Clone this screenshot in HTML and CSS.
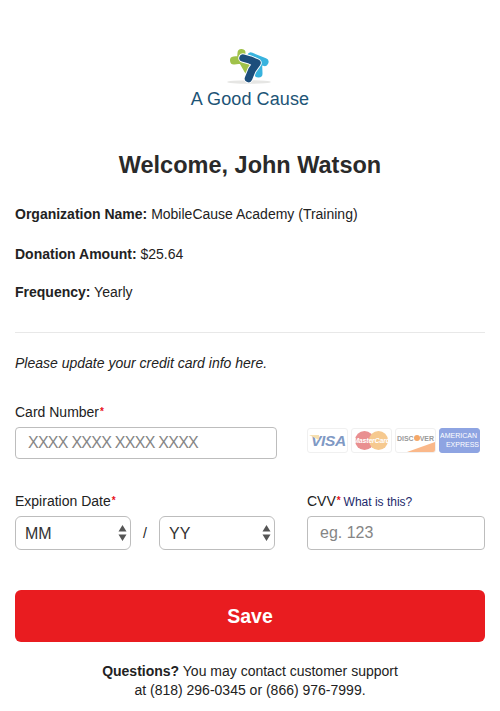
FILE: index.html
```html
<!DOCTYPE html>
<html lang="en">
<head>
<meta charset="utf-8">
<title>A Good Cause</title>
<link rel="stylesheet" href="styles.css">
</head>
<body>
<main class="page">
  <header class="logo">
    <svg class="logo-mark" width="50" height="42" viewBox="0 0 50 42" aria-hidden="true">
      <ellipse cx="24" cy="37" rx="22" ry="1.800" fill="#e6e6e4"/>
      <path d="M16.500 8 L16 14 M9 15.500 L17 14.500 L23 25" fill="none" stroke="#a0c24a" stroke-width="8" stroke-linecap="round" stroke-linejoin="round"/>
      <path d="M26 11.500 L39.500 17 M33 15 L33.500 28.500" fill="none" stroke="#38b3de" stroke-width="8" stroke-linecap="round" stroke-linejoin="round"/>
      <path d="M18 13 L25 15 L32 18 L27 25 L23.500 33.500" fill="none" stroke="#fff" stroke-width="9.500" stroke-linecap="round" stroke-linejoin="round"/>
      <path d="M18 13 L25 15 L32 18 L27 25 L23.500 33.500" fill="none" stroke="#1d4f7c" stroke-width="7.500" stroke-linecap="round" stroke-linejoin="round"/>
    </svg>
    <div class="logo-name">A Good Cause</div>
  </header>
  <h1 class="welcome">Welcome, John Watson</h1>
  <p class="info"><b>Organization Name:</b> MobileCause Academy (Training)</p>
  <p class="info"><b>Donation Amount:</b> $25.64</p>
  <p class="info"><b>Frequency:</b> Yearly</p>
  <hr class="rule">
  <p class="note">Please update your credit card info here.</p>
  <form class="form">
    <div class="card-row">
      <div class="field card-field">
        <label class="label" for="card">Card Number<span class="req">*</span></label>
        <input class="input card-input" id="card" placeholder="XXXX XXXX XXXX XXXX">
      </div>
      <div class="cards" aria-hidden="true">
        <div class="cc cc-visa"><i class="visa-flag"></i><span>VISA</span></div>
        <div class="cc cc-mc">
          <i class="mc-left"></i><i class="mc-right"></i>
          <span>MasterCard</span>
        </div>
        <div class="cc cc-disc"><span>DISC<b></b>VER</span><i class="disc-swoosh"></i></div>
        <div class="cc cc-amex"><span>AMERICAN</span><span class="amex-2">EXPRESS</span></div>
      </div>
    </div>
    <div class="exp-row">
      <div class="field exp-field">
        <label class="label" for="mm">Expiration Date<span class="req">*</span></label>
        <div class="exp-controls">
          <div class="select-wrap">
            <select class="select" id="mm"><option>MM</option></select>
            <svg class="updown" width="9" height="16" viewBox="0 0 9 16" aria-hidden="true"><path d="M4.500 0l4 6.500h-8zM4.500 16l4-6.500h-8z" fill="#555"/></svg>
          </div>
          <span class="slash">/</span>
          <div class="select-wrap">
            <select class="select" id="yy"><option>YY</option></select>
            <svg class="updown" width="9" height="16" viewBox="0 0 9 16" aria-hidden="true"><path d="M4.500 0l4 6.500h-8zM4.500 16l4-6.500h-8z" fill="#555"/></svg>
          </div>
        </div>
      </div>
      <div class="field cvv-field">
        <label class="label" for="cvv">CVV<span class="req">*</span> <a class="what" href="#">What is this?</a></label>
        <input class="input cvv-input" id="cvv" placeholder="eg. 123">
      </div>
    </div>
    <button class="save" type="button">Save</button>
  </form>
  <p class="contact"><b>Questions?</b> You may contact customer support<br>at (818) 296-0345 or (866) 976-7999.</p>
</main>
</body>
</html>
```

FILE: styles.css
```css
* { box-sizing: border-box; }
html, body { margin: 0; padding: 0; background: #fff; }
body { font-family: "Liberation Sans", Arial, sans-serif; color: #222; font-size: 14px; }
.page { width: 500px; height: 711px; padding: 45px 15px 0; overflow: hidden; }

.logo { display: flex; flex-direction: column; align-items: center; }
.logo-mark { display: block; }
.logo-name { font-size: 18px; line-height: 22px; margin-top: 1px; color: #1d5476; letter-spacing: 0.1px; }

.welcome { margin: 40px 0 0; font-size: 23.500px; line-height: 30px; font-weight: 700; text-align: center; color: #2a2a2a; }

.info { margin: 0; line-height: 20px; height: 20px; }
.welcome + .info { margin-top: 24px; }
.info + .info { margin-top: 20px; }
.info + .info + .info { margin-top: 18px; }
.rule { border: 0; border-top: 1px solid #e8e8e8; margin: 30px 0 0; }
.note { margin: 20px 0 0; font-style: italic; line-height: 20px; }

.form { margin-top: 29px; }
.card-row { display: flex; gap: 30px; }
.field { display: flex; flex-direction: column; }
.label { display: block; height: 20px; line-height: 20px; margin-bottom: 5px; color: #222; white-space: nowrap; }
.req { color: #e8101a; font-size: 10px; font-weight: 700; margin-left: 1px; line-height: 1; vertical-align: 2px; }
.what { font-size: 12px; color: #1c2a6b; text-decoration: none; margin-left: -1px; }
.input { font: inherit; font-size: 16px; height: 32px; border: 1px solid #bdbdbd; border-radius: 4px; padding: 0 12px; color: #222; background: #fff; outline: 0; }
.input::placeholder { color: #858585; opacity: 1; }
.card-input { width: 262px; letter-spacing: -0.740px; }
.cards { display: flex; gap: 3px; margin-top: 26px; height: 25px; }
.cc { position: relative; width: 41px; height: 25px; border: 1px solid #f0f0f0; border-radius: 3px; overflow: hidden; background: #fff; }
.cc span { display: block; }
.cc-visa span { font-size: 15.500px; font-weight: 700; font-style: italic; color: #7f99c4; line-height: 23px; text-align: right; padding-right: 1px; letter-spacing: -0.3px; }
.visa-flag { position: absolute; left: 1px; top: 6px; width: 10px; height: 5px; background: #f6dfae; clip-path: polygon(0 0, 100% 0, 100% 100%); }
.mc-left, .mc-right { position: absolute; top: 2px; width: 19px; height: 19px; border-radius: 50%; }
.mc-left { left: 3px; background: #e98f90; }
.mc-right { left: 17px; background: #f6c98f; }
.cc-mc span { position: absolute; left: 0; right: 0; top: 6px; font-size: 7px; line-height: 11px; font-weight: 700; font-style: italic; color: #fff; text-align: center; white-space: nowrap; letter-spacing: -0.2px; }
.cc-disc span { font-size: 7px; font-weight: 700; color: #9a9a9a; text-align: center; line-height: 9px; margin-top: 5px; white-space: nowrap; }
.cc-disc b { display: inline-block; width: 6px; height: 6px; border-radius: 50%; background: #f5a868; }
.disc-swoosh { position: absolute; right: 0; bottom: 0; width: 28px; height: 10px; background: #fab88a; clip-path: polygon(0 100%, 100% 0, 100% 100%); }
.cc-amex { background: #8ea4e2; border-color: #8ea4e2; color: #fff; font-size: 7px; line-height: 9px; padding: 2px 0 0 0; }
.cc-amex span { white-space: nowrap; color: #fff; }
.amex-2 { text-align: right; }

.exp-row { display: flex; gap: 32px; margin-top: 32px; }
.exp-controls { display: flex; align-items: center; gap: 0; }
.select-wrap { position: relative; width: 116px; height: 34px; }
.select { appearance: none; -webkit-appearance: none; width: 100%; height: 100%; font: inherit; font-size: 16px; color: #333; background: #fff; border: 1px solid #bdbdbd; border-radius: 6px; padding: 0 9px; outline: 0; }
.updown { position: absolute; right: 4px; top: 9px; pointer-events: none; }
.slash { width: 28px; text-align: center; font-size: 14px; color: #222; }
.cvv-input { width: 178px; height: 34px; }

.save { display: block; width: 470px; height: 52px; margin-top: 40px; border: 0; border-radius: 6px; background: #e91c20; color: #fff; font: inherit; font-size: 19.500px; font-weight: 700; }
.contact { margin: 20px 0 0; line-height: 19px; text-align: center; }
```
